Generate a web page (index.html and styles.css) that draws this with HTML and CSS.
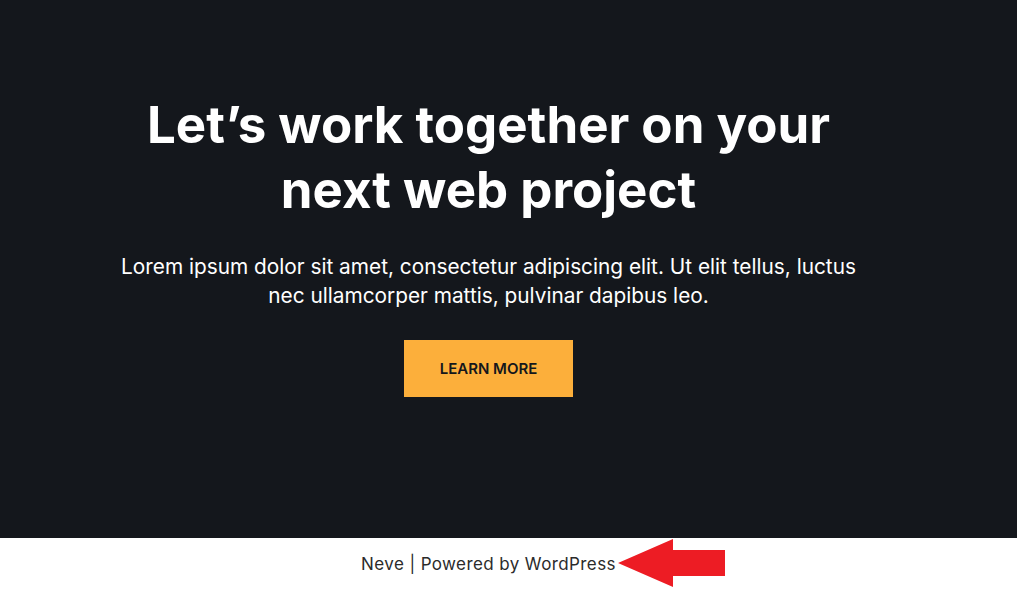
FILE: index.html
```html
<!DOCTYPE html>
<html lang="en">
<head>
  <meta charset="UTF-8">
  <meta name="viewport" content="width=device-width, initial-scale=1.0">
  <title>Neve</title>
  <link rel="stylesheet" href="styles.css">
</head>
<body>

  <section class="hero">
    <div class="hero-inner">
      <h1 class="hero-title">Let’s work together on your next web project</h1>
      <p class="hero-text">Lorem ipsum dolor sit amet, consectetur adipiscing elit. Ut elit tellus, luctus nec ullamcorper mattis, pulvinar dapibus leo.</p>
      <a class="hero-button" href="#">Learn more</a>
    </div>
  </section>

  <footer class="site-footer">
    <span class="credits">Neve | Powered by WordPress</span>
    <svg class="arrow" width="107" height="50" viewBox="0 0 107 50">
      <polygon points="0,25 55,1 55,12 107,12 107,38 55,38 55,49" fill="#ed1c24"/>
    </svg>
  </footer>

</body>
</html>
```

FILE: styles.css
```css
body {
  margin: 0;
  font-family: Inter, "Open Sans", sans-serif;
  background-color: #fff;
}

.hero {
  background-color: #14171c;
  height: 538px;
  box-sizing: border-box;
  padding: 92px 40px 0 0;
}

.hero-inner {
  width: 760px;
  margin: 0 auto;
  text-align: center;
}

.hero-title {
  margin: 0 auto;
  width: 740px;
  color: #fff;
  font-size: 51px;
  font-weight: 700;
  line-height: 65px;
}

.hero-text {
  margin: 30px 0 0;
  color: #fff;
  font-size: 20.8px;
  line-height: 29px;
}

.hero-button {
  display: inline-block;
  margin-top: 30px;
  width: 169px;
  height: 57px;
  line-height: 57px;
  background-color: #fcaf3b;
  color: #14171c;
  font-size: 15px;
  font-weight: 600;
  text-transform: uppercase;
  text-decoration: none;
}

.site-footer {
  height: 51px;
  padding-right: 40px;
  display: flex;
  justify-content: center;
  align-items: center;
  position: relative;
}

.credits {
  color: #2b2b2b;
  font-size: 17px;
  letter-spacing: 0.4px;
}

.arrow {
  position: absolute;
  left: 618px;
  top: 0;
}
```
